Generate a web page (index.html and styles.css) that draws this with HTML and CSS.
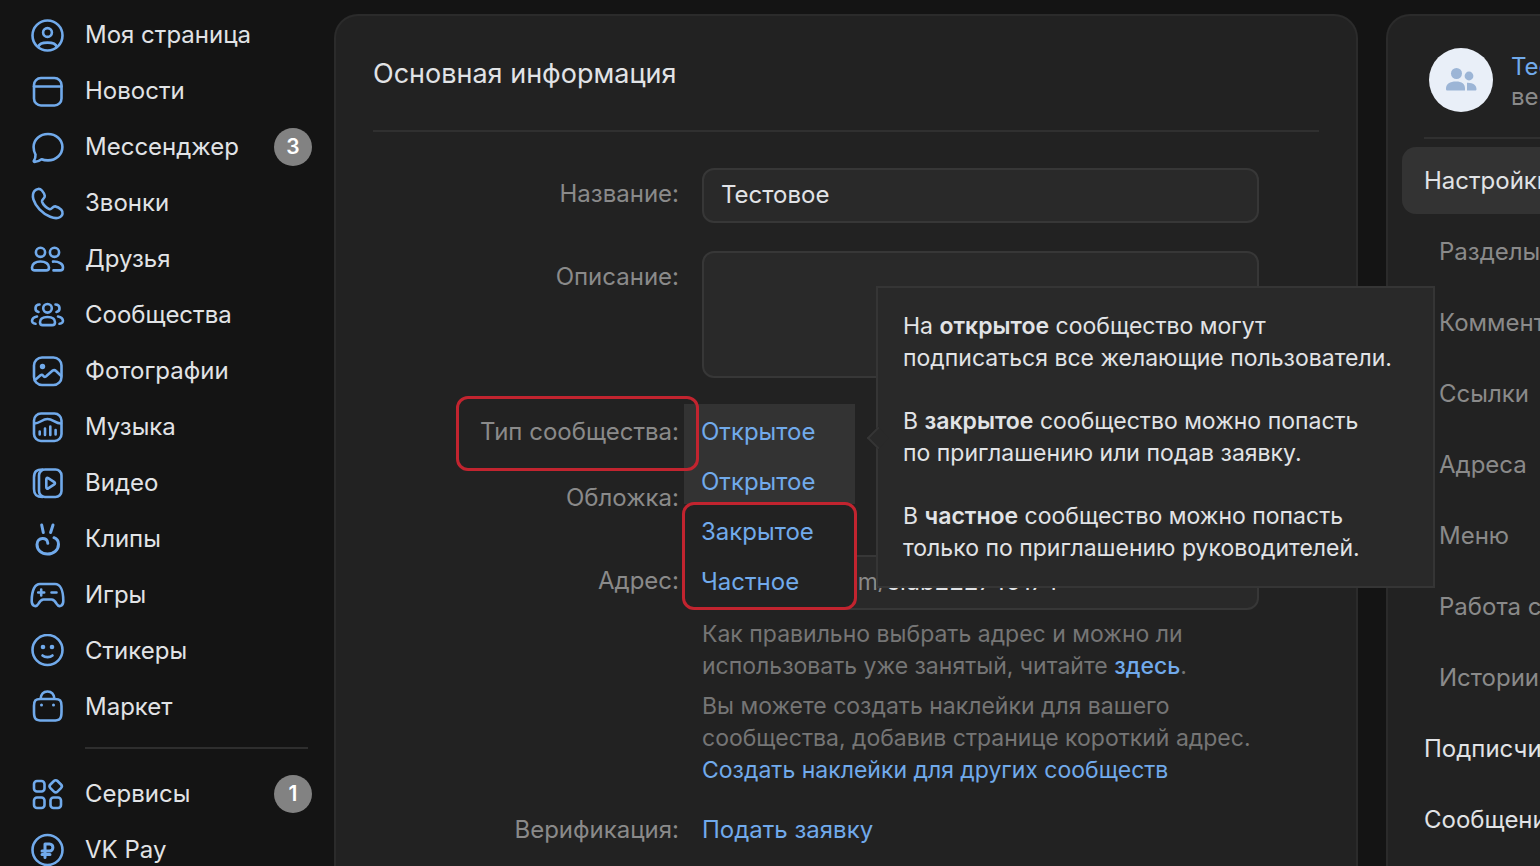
FILE: index.html
```html
<!DOCTYPE html>
<html lang="ru">
<head>
<meta charset="utf-8">
<meta name="viewport" content="width=device-width, initial-scale=1">
<title>Основная информация</title>
<link rel="stylesheet" href="styles.css">
</head>
<body>
<div class="layout">
  <nav class="sidebar" aria-label="Главное меню">
    <a class="nav-item" href="#"><svg class="icon" viewBox="0 0 35 35"><circle cx="17.5" cy="17.5" r="15"/><circle cx="17.5" cy="14.5" r="4.4"/><path d="M8.2 29C9 25.8 13 24.6 17.5 24.6S26 25.8 26.8 29"/></svg><span>Моя страница</span></a>
    <a class="nav-item" href="#"><svg class="icon" viewBox="0 0 35 35"><rect x="4" y="4" width="27.500" height="27.500" rx="7"/><path d="M4 12.500H31.500"/></svg><span>Новости</span></a>
    <a class="nav-item" href="#"><svg class="icon" viewBox="0 0 35 35"><path d="M18 4C26 4 32.400 9.600 32.400 17S26 30.400 18 30.400C15.500 30.400 13.300 30 11.600 29.200C9.500 30.800 7.200 31.800 4.500 31.900C3.700 31.900 3.500 31.200 4 30.500C5.200 28.700 5.600 27.200 5.500 24.600C4.200 22.400 3.600 19.900 3.600 17C3.600 9.600 10 4 18 4Z"/></svg><span>Мессенджер</span><span class="badge">3</span></a>
    <a class="nav-item" href="#"><svg class="icon" viewBox="0 0 35 35"><path d="M4.600 4.800C6.600 2.400 9.900 2.300 11.900 4.500C13.200 6 14.600 8.500 14.800 9.900C15 12.600 11.400 13.300 12 15.600C12.900 18.700 16.800 22.400 19.700 23.200C21.900 23.600 22.500 20.200 25.200 20.400C27 20.600 29.700 22.100 31.200 23.700C33.400 26.200 32.800 29.500 30.300 31C25 34.200 15.600 29.800 9.500 23.400C3.500 16.900 0.900 9.500 4.600 4.800Z"/></svg><span>Звонки</span></a>
    <a class="nav-item" href="#"><svg class="icon" viewBox="0 0 35 35"><circle cx="10.500" cy="10.300" r="4.600"/><circle cx="24.500" cy="10.300" r="4.600"/><path d="M10.500 19.500C15.500 19.500 19 22 19 25.400C19 27.600 18 28.400 16.200 28.400H4.800C3 28.400 2 27.600 2 25.400C2 22 5.500 19.500 10.500 19.500ZM23 19.600C29 19.300 33 21.800 33 25.400C33 27.600 32 28.400 30.200 28.400H23.500"/></svg><span>Друзья</span></a>
    <a class="nav-item" href="#"><svg class="icon" viewBox="0 0 35 35"><circle cx="17.500" cy="10.300" r="4.300"/><path d="M17.500 19C22.500 19 25 21 25 24.200C25 26.300 24 27.100 22.300 27.100H12.700C11 27.100 10 26.300 10 24.200C10 21 12.500 19 17.500 19ZM9.500 6.500C4.500 6.500 4.200 13.200 8.500 14M25.500 6.500C30.500 6.500 30.800 13.200 26.500 14M7 18.500C.8 19.700 .5 25.500 5.500 25.800M28 18.500C34.200 19.700 34.500 25.500 29.500 25.800"/></svg><span>Сообщества</span></a>
    <a class="nav-item" href="#"><svg class="icon" viewBox="0 0 35 35"><rect x="4" y="3.500" width="27.500" height="27.500" rx="8"/><circle class="solid" cx="12.500" cy="12.500" r="2.700"/><path d="M5 26L10.500 21.300C11.800 20.300 12.400 20.700 13.200 21.700C14.300 23.300 15.400 23.100 16.700 21.800L22.700 16.600C24 15.600 25 16 26 17L31 21.700"/></svg><span>Фотографии</span></a>
    <a class="nav-item" href="#"><svg class="icon" viewBox="0 0 35 35"><rect x="4" y="3.500" width="27.500" height="27.500" rx="7"/><path d="M4.500 13.500C10 13.500 12 9 17.500 9S25 13.500 31 13.500M9.700 21.500V24.500M15 18.500V25M20.300 16.500V25M25.600 20V24.500"/></svg><span>Музыка</span></a>
    <a class="nav-item" href="#"><svg class="icon" viewBox="0 0 35 35"><rect x="9" y="3.500" width="22.500" height="27.500" rx="6"/><path d="M12.500 3.500C6.500 3.500 4 5.500 4 11.500V23C4 29 6.500 31 12.500 31M16.300 13.200V21.300C16.300 22.500 17.300 22.900 18.200 22.300L24.300 18.300C25.200 17.700 25.200 16.800 24.300 16.200L18.200 12.200C17.300 11.600 16.300 12 16.300 13.200Z"/></svg><span>Видео</span></a>
    <a class="nav-item" href="#"><svg class="icon clips" viewBox="0 0 35 35"><path d="M11.700 3L13.300 10.500M23 3L20.600 10.500M17.800 21.300C17.800 14.500 7 14.700 7 22.500C7 28.200 11.500 32 17.500 32S28.500 28 28.500 22.200C28.500 19 27 16.800 24 15.700"/></svg><span>Клипы</span></a>
    <a class="nav-item" href="#"><svg class="icon" viewBox="0 0 35 35"><path d="M10 6H25C30 6 33.300 12 33.300 23C33.300 28.300 28.800 29.800 26.500 25.700C25 22.800 24.200 21.500 21.500 21.500H13.500C10.800 21.500 10 22.800 8.500 25.700C6.200 29.800 1.700 28.300 1.700 23C1.700 12 5 6 10 6ZM11.200 11.500V17.500M8.200 14.500H14.200M21.500 14.500H26.500"/></svg><span>Игры</span></a>
    <a class="nav-item" href="#"><svg class="icon" viewBox="0 0 35 35"><circle cx="17.500" cy="16" r="15"/><path d="M12.500 21.500C15 23.700 20 23.700 22.500 21.500"/><circle class="solid" cx="13" cy="13" r="2.300"/><circle class="solid" cx="22" cy="13" r="2.300"/></svg><span>Стикеры</span></a>
    <a class="nav-item" href="#"><svg class="icon" viewBox="0 0 35 35"><path d="M10.500 9C11 4 14 1.500 17.500 1.500S24 4 24.500 9M10.500 9H25C30 9 31.500 10.500 31.500 16V22C31.500 29 30 30.500 23 30.500H12.500C5.500 30.500 4 29 4 22V16C4 10.500 5.500 9 10.500 9Z"/><circle class="solid" cx="11.500" cy="15" r="1.500"/><circle class="solid" cx="23.500" cy="15" r="1.500"/></svg><span>Маркет</span></a>
    <hr class="nav-divider">
    <a class="nav-item" href="#"><svg class="icon" viewBox="0 0 35 35"><rect x="4" y="4" width="10.500" height="10.500" rx="3"/><rect x="20.700" y="4.300" width="10" height="10" rx="2.500" transform="rotate(45 25.700 9.300)"/><rect x="4" y="20.500" width="10.500" height="10.500" rx="3"/><rect x="20.500" y="20.500" width="10.500" height="10.500" rx="3"/></svg><span>Сервисы</span><span class="badge">1</span></a>
    <a class="nav-item" href="#"><svg class="icon" viewBox="0 0 35 35"><circle cx="17.500" cy="17" r="15"/><path class="bold" d="M15 24.500V11H19.500C24 11 24 18 19.500 18H12M12 21.500H20"/></svg><span>VK Pay</span></a>
  </nav>

  <main class="panel">
    <h1 class="title">Основная информация</h1>
    <form class="form">
      <label class="label" for="name">Название:</label>
      <input class="input" id="name" type="text" value="Тестовое">

      <label class="label" for="about">Описание:</label>
      <textarea class="input area" id="about"></textarea>

      <div class="label type-label"><span id="type-label" class="mark-label">Тип сообщества:</span></div>
      <div class="type-field">
        <div class="dropdown">
          <button class="option current" type="button" aria-haspopup="listbox" aria-expanded="true" aria-labelledby="type-label">Открытое</button>
          <div role="listbox" aria-labelledby="type-label">
            <button class="option current" type="button" role="option" aria-selected="true">Открытое</button>
            <div class="marked-options" role="presentation">
              <button class="option" type="button" role="option" aria-selected="false">Закрытое</button>
              <button class="option" type="button" role="option" aria-selected="false">Частное</button>
            </div>
          </div>
        </div>
        <div class="tooltip" role="tooltip">
          <p>На <b>открытое</b> сообщество могут<br>подписаться все желающие пользователи.</p>
          <p>В <b>закрытое</b> сообщество можно попасть<br>по приглашению или подав заявку.</p>
          <p>В <b>частное</b> сообщество можно попасть<br>только по приглашению руководителей.</p>
        </div>
      </div>

      <div class="label cover-label">Обложка:</div>
      <div></div>

      <label class="label" for="address">Адрес:</label>
      <div>
        <div class="input address"><span class="prefix">https://vk.com/</span><input class="bare" id="address" type="text" value="club222749174"></div>
        <p class="hint">Как правильно выбрать адрес и можно ли использовать уже занятый, читайте <a class="link strong" href="#">здесь</a>.</p>
        <p class="hint">Вы можете создать наклейки для вашего сообщества, добавив странице короткий адрес. <a class="link" href="#">Создать наклейки для других сообществ</a></p>
      </div>

      <div class="label verify">Верификация:</div>
      <a class="link verify" href="#">Подать заявку</a>
    </form>
  </main>

  <aside class="side">
    <div class="group">
      <svg class="avatar" viewBox="0 0 64 64"><circle cx="32" cy="32" r="32" fill="#e9eff8"/><g fill="#9cb5d6"><circle cx="27.500" cy="25.500" r="5.500"/><circle cx="40" cy="28" r="4.400"/><path d="M17 40.500C17 36 21 33.500 27 33.500S36 36 36 40.500V42.500H18.500C17.500 42.500 17 42 17 41ZM38 42.500V34.800C44 34.500 47.500 37.500 47.500 41C47.500 42 47 42.500 46 42.500Z"/></g></svg>
      <div class="group-text"><a class="link" href="#">Тестовое</a><span>вернуться</span></div>
    </div>
    <nav class="menu" aria-label="Настройки сообщества">
      <a class="menu-item active" href="#">Настройки</a>
      <a class="menu-item sub" href="#">Разделы</a>
      <a class="menu-item sub" href="#">Комментарии</a>
      <a class="menu-item sub" href="#">Ссылки</a>
      <a class="menu-item sub" href="#">Адреса</a>
      <a class="menu-item sub" href="#">Меню</a>
      <a class="menu-item sub" href="#">Работа с API</a>
      <a class="menu-item sub" href="#">Истории</a>
      <a class="menu-item" href="#">Подписчики</a>
      <a class="menu-item" href="#">Сообщения</a>
    </nav>
  </aside>
</div>
</body>
</html>
```
FILE: styles.css
```css
* { box-sizing: border-box; }

body {
  margin: 0;
  height: 100vh;
  overflow: hidden;
  background: #141414;
  color: #e1e3e6;
  font: 400 24px/32px Inter, "Noto Sans", sans-serif;
}

a { color: inherit; text-decoration: none; }
p { margin: 0; }
input, textarea, button { font: inherit; color: inherit; }

.layout {
  display: grid;
  grid-template-columns: 334px minmax(0, 1fr) 154px;
  min-height: 100vh;
}

/* Left navigation */
.sidebar { padding: 7px 22px 0 30px; }
.nav-item {
  display: flex;
  align-items: center;
  gap: 20px;
  height: 56px;
}
.icon {
  flex: none;
  width: 35px;
  height: 35px;
  fill: none;
  stroke: #71aaeb;
  stroke-width: 2.6;
  stroke-linecap: round;
  stroke-linejoin: round;
}
.icon .solid { fill: #71aaeb; stroke: none; }
.icon .bold, .clips { stroke-width: 3; }
.badge {
  margin-left: auto;
  width: 38px;
  height: 38px;
  border-radius: 50%;
  background: #828282;
  color: #fff;
  font-size: 21px;
  font-weight: 600;
  line-height: 38px;
  text-align: center;
}
.nav-divider {
  margin: 12px 4px 17px 55px;
  border: 0;
  border-top: 2px solid #2e2e2e;
}

/* Main panel */
.panel {
  margin: 14px 28px 0 0;
  padding: 0 37px;
  background: #222;
  border: 2px solid #2b2b2b;
  border-bottom: 0;
  border-radius: 24px 24px 0 0;
}
.title {
  margin: 0;
  padding: 40px 0 38px;
  border-bottom: 2px solid #303030;
  font-size: 27px;
  font-weight: 400;
  line-height: 36px;
}
.form {
  display: grid;
  grid-template-columns: 306px minmax(0, 1fr);
  column-gap: 23px;
  padding: 36px 60px 0 0;
}
.label {
  padding-top: 10px;
  color: #8a8a8a;
  text-align: right;
}
.input {
  width: 100%;
  height: 55px;
  margin: 0 0 28px;
  padding: 0 17px 2px;
  background: #292929;
  border: 2px solid #373737;
  border-radius: 12px;
}
.area {
  display: block;
  height: 127px;
  margin-bottom: 26px;
  resize: none;
}
.type-label { padding-top: 12px; }
.mark-label { position: relative; }
.mark-label::before {
  content: "";
  position: absolute;
  z-index: 3;
  inset: -21px -20px -25px -24px;
  border: 3px solid #c2242f;
  border-radius: 12px;
}
.type-field { position: relative; min-height: 68px; }
.dropdown {
  position: absolute;
  z-index: 2;
  top: 0;
  left: -18px;
  width: 171px;
  background: #222;
  border-radius: 4px;
}
.option {
  display: block;
  width: 100%;
  height: 50px;
  padding: 5px 0 0 17px;
  border: 0;
  background: none;
  color: #71aaeb;
  text-align: left;
}
.current { background: #333; }
.marked-options {
  padding-bottom: 4px;
  outline: 3px solid #c2242f;
  outline-offset: -1px;
  border-radius: 10px;
  background: #222;
}
.tooltip {
  position: absolute;
  z-index: 4;
  top: -118px;
  left: 174px;
  display: grid;
  gap: 31px;
  padding: 22px 41px 22px 25px;
  background: #292929;
  border: 2px solid #353535;
  font-size: 23px;
  white-space: nowrap;
}
.tooltip::before {
  content: "";
  position: absolute;
  top: 142px;
  left: -8px;
  width: 14px;
  height: 14px;
  background: #292929;
  border: solid #353535;
  border-width: 0 0 2px 2px;
  transform: rotate(45deg);
}
.tooltip b { font-weight: 600; }
.cover-label { min-height: 83px; }
.address { display: flex; align-items: center; margin: 0; }
.prefix { color: #8a8a8a; font-size: 23px; }
.bare {
  flex: 1;
  min-width: 0;
  padding: 0;
  border: 0;
  background: none;
}
.hint { padding-top: 8px; color: #757575; font-size: 23px; }
.link { color: #71aaeb; }
.strong { font-weight: 500; }
.verify { padding-top: 28px; }

/* Community settings column */
.side {
  margin-top: 14px;
  padding: 0 0 0 14px;
  overflow: hidden;
  background: #222;
  border: solid #2b2b2b;
  border-width: 2px 0 0 2px;
  border-radius: 24px 0 0 0;
  white-space: nowrap;
}
.group {
  display: flex;
  align-items: center;
  gap: 18px;
  margin-left: 22px;
  padding: 32px 0 25px 5px;
  border-bottom: 2px solid #303030;
}
.avatar { flex: none; width: 64px; height: 64px; }
.group-text { display: grid; padding-top: 4px; line-height: 30px; color: #8a8a8a; }
.menu { padding-top: 8px; }
.menu-item {
  display: block;
  height: 67px;
  margin-bottom: 4px;
  padding-left: 22px;
  line-height: 67px;
}
.active { background: #333; border-radius: 14px 0 0 14px; }
.sub { padding-left: 37px; color: #8a8a8a; }
```
